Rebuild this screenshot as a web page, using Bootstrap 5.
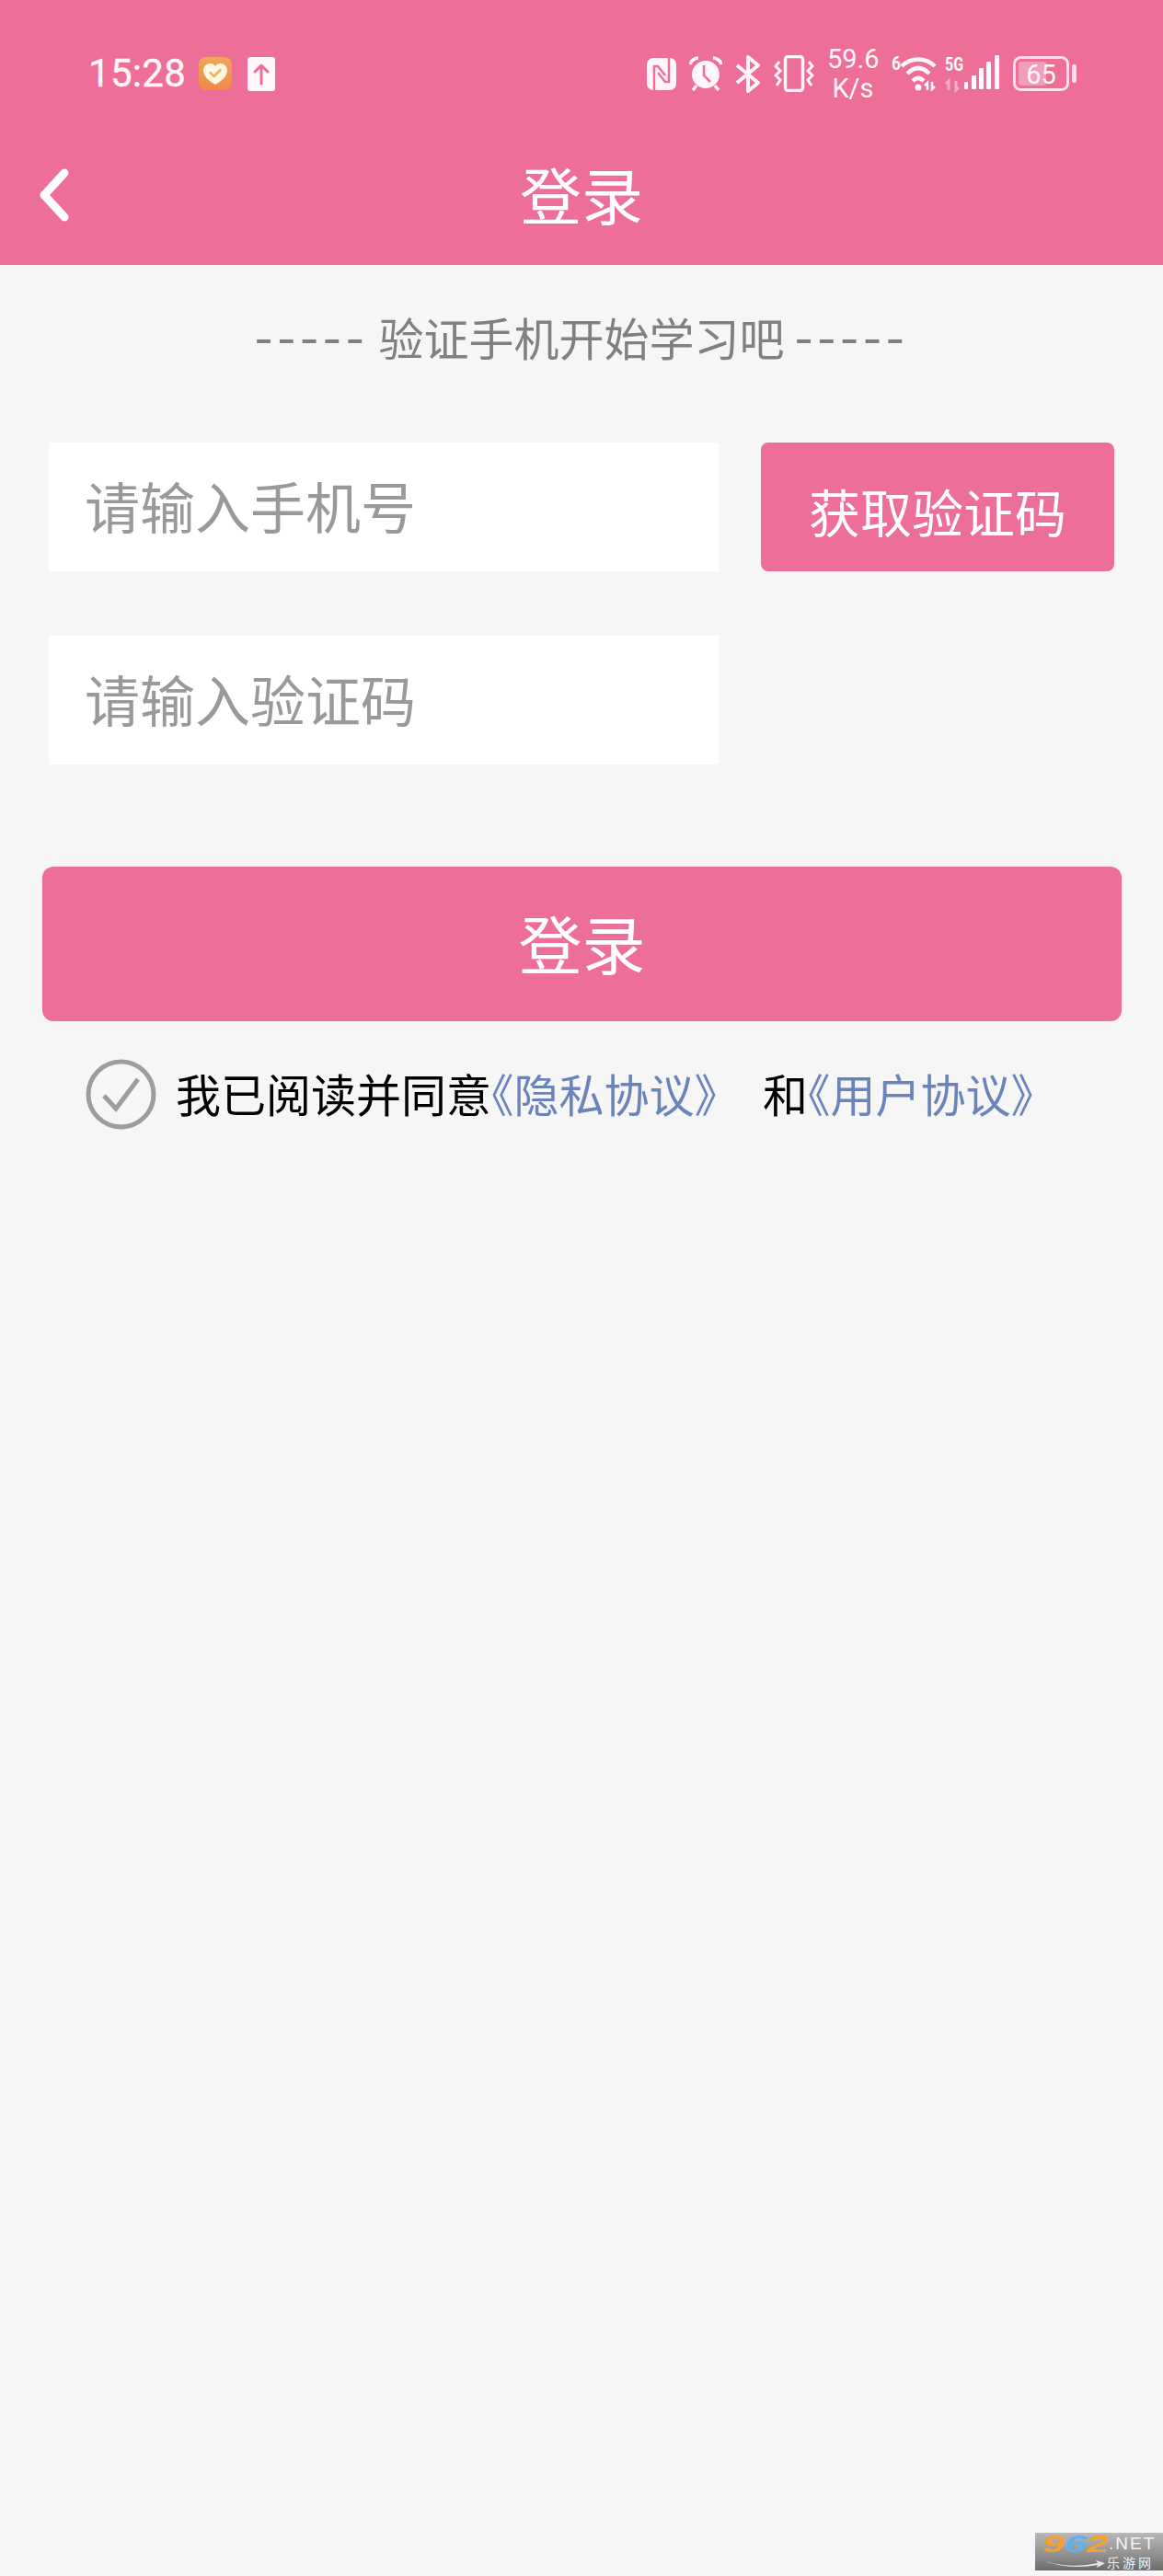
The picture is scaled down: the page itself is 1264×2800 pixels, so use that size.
<!DOCTYPE html>
<html lang="zh-CN">
<head>
  <meta charset="UTF-8">
  <title>登录</title>
  <meta name="viewport" content="width=device-width, initial-scale=1">
  <link href="https://cdn.jsdelivr.net/npm/bootstrap@5.3.0/dist/css/bootstrap.min.css" rel="stylesheet">
  <style>
    :root { --pink: #ed6f97; }
    body {
      background: #f6f6f6;
      font-family: "Noto Sans CJK SC", "Noto Sans", sans-serif;
      min-height: 2800px;
      position: relative;
    }
    .app-head { background: var(--pink); color: #fff; height: 288px; }
    .status-row { height: 160px; padding: 0 93px 0 96px; }
    .clock { font: 400 42px/1 Roboto, sans-serif; letter-spacing: .3px; color: #fff6f9; -webkit-text-stroke: .4px #fff6f9; }
    .left-icons { gap: 17px; margin-left: 14px; }
    .right-icons { gap: 14px; }
    .speed { width: 56px; font: 400 29px/32px Roboto, sans-serif; text-align: center; white-space: nowrap; color: #fff6f9; }
    .title-row { height: 128px; }
    .back-btn { left: 36px; top: 20px; }
    .page-title { font-size: 67px; line-height: 1; font-weight: 400; margin: 0; padding-bottom: 30px; }
    .subtitle { color: #808080; font-size: 49px; line-height: 1; margin: 45px 0 0; font-weight: 400; text-align: center; height: 60px; white-space: nowrap; }
    .dashes { font-size: 58px; letter-spacing: 4.700px; }
    .form-area { margin-top: 88px; padding-left: 53px; }
    .phone-input.form-control {
      width: 728px; height: 140px; border: 0; border-radius: 0; background: #fff;
      font-size: 60px; padding: 0 0 6px 39px; color: #333;
    }
    .phone-input::placeholder { color: #999; opacity: 1; }
    .code-btn.btn {
      width: 384px; height: 140px; margin-left: 46px; padding: 8px 0 0;
      background: var(--pink); border: 0; border-radius: 8px; color: #fff; font-size: 56px; line-height: 1;
    }
    .second-row { margin-top: 70px; }
    .login-btn.btn {
      display: block; width: 1173px; height: 168px; margin: 111px 0 0 46px; padding: 0 0 4px;
      background: var(--pink); border: 0; border-radius: 12px; color: #fff; font-size: 69px; line-height: 1;
    }
    .agree-row { margin-top: 41px; padding-left: 93px; height: 77px; font-size: 49px; color: #000; white-space: nowrap; }
    .agree-row svg { margin-right: 21px; flex: none; }
    .agree-text { line-height: 77px; font-feature-settings: "halt"; padding-bottom: 5px; }
    .agree-link { color: #6a84bb; text-decoration: none; }
    .agree-and { margin-left: 50px; }
    .site-mark {
      position: absolute; right: 0; top: 2753px; width: 139px; height: 41px;
      background: linear-gradient(#b8b8b8, #8f8f8f 60%, #6c6c6c);
    }
    .mark-num { left: 8px; top: -3px; font: italic 700 26px/30px "Liberation Sans", sans-serif; color: #f5a030; transform: scaleX(1.66); transform-origin: left center; }
    .mark-num b { color: #5fb0f0; font-weight: 700; }
    .mark-net { left: 80px; top: 2px; font: 400 19px/20px "Liberation Sans", sans-serif; letter-spacing: 2px; color: #f3f3f3; }
    .mark-cn { left: 78px; top: 22px; font-size: 14px; line-height: 20px; letter-spacing: 3px; color: #f3f3f3; }
    .mark-swoosh { left: 6px; top: 27px; }
  </style>
</head>
<body>

<header class="app-head">
  <div class="status-row d-flex align-items-center justify-content-between">
    <div class="d-flex align-items-center">
      <span class="clock">15:28</span>
      <div class="left-icons d-flex align-items-center">
        <svg width="36" height="36" viewBox="0 0 36 36">
          <defs><linearGradient id="og" x1="0" y1="0" x2="0" y2="1"><stop offset="0" stop-color="#f2a65a"/><stop offset="1" stop-color="#ee8a45"/></linearGradient></defs>
          <rect width="36" height="36" rx="8" fill="url(#og)"/>
          <path d="M18 30C11 26 5 21 5 14.500C5 10 8.500 7 12.500 7C15 7 17 8 18 10C19 8 21 7 23.500 7C27.500 7 31 10 31 14.500C31 21 25 26 18 30Z" fill="#fff7e0"/>
          <path d="M12.500 17l4 4 7-7" fill="none" stroke="#eeb264" stroke-width="2.500" stroke-linecap="round" stroke-linejoin="round"/>
        </svg>
        <svg width="30" height="37" viewBox="0 0 30 37">
          <rect width="30" height="37" rx="3" fill="#fff6f9"/>
          <path d="M15 29V10M8 16l7-7 7 7" fill="none" stroke="#ed6f97" stroke-width="3" stroke-linecap="round" stroke-linejoin="round"/>
        </svg>
      </div>
    </div>
    <div class="right-icons d-flex align-items-center">
      <!-- nfc -->
      <svg width="32" height="35" viewBox="0 0 32 35">
        <rect width="32" height="35" rx="7" fill="#fff6f9"/>
        <path d="M8 35V9h4l8 10M24 0v26h-4l-8-10" fill="none" stroke="#ed6f97" stroke-width="2.500"/>
      </svg>
      <!-- alarm -->
      <svg width="36" height="38" viewBox="0 0 36 38">
        <circle cx="18" cy="20" r="15" fill="#fff6f9"/>
        <path d="M1 9c1-4 5-7 9-7M35 9c-1-4-5-7-9-7M8 32l-4 5M28 32l4 5" fill="none" stroke="#fff6f9" stroke-width="3.500"/>
        <path d="M16 10v11l7 7" fill="none" stroke="#ed6f97" stroke-width="2.500"/>
      </svg>
      <!-- bluetooth -->
      <svg width="28" height="41" viewBox="0 0 28 41">
        <path d="M2 11l23 19-11 9V2l11 9L2 30" fill="none" stroke="#fff6f9" stroke-width="4" stroke-linejoin="round"/>
      </svg>
      <!-- vibrate -->
      <svg width="44" height="40" viewBox="0 0 44 40">
        <rect x="12.500" y="1.500" width="19" height="37" rx="3" fill="none" stroke="#fff6f9" stroke-width="3.500"/>
        <path d="M6 7L2 12l5 5-5 5 5 5-4 6M38 7l4 5-5 5 5 5-5 5 4 6" fill="none" stroke="#fff6f9" stroke-width="3"/>
      </svg>
      <div class="speed">59.6<br>K/s</div>
      <!-- wifi and signal -->
      <svg width="118" height="56" viewBox="0 -8 118 56">
        <text x="0" y="16" font-family="Roboto, sans-serif" font-weight="700" font-size="21" fill="#fff6f9" textLength="10" lengthAdjust="spacingAndGlyphs">6</text>
        <path d="M11 12C21 2 37 2 47 12M17 20C25 12 33 12 41 20M23 28c4-4 8-4 12 0" fill="none" stroke="#fff6f9" stroke-width="4.500"/>
        <circle cx="29" cy="35" r="3.500" fill="#fff6f9"/>
        <path d="M39 38v-8l-3 3M44 29v8l3-3" fill="none" stroke="#fff6f9" stroke-width="2.500"/>
        <text x="58" y="17" font-family="Roboto, sans-serif" font-weight="700" font-size="20" fill="#fff6f9" textLength="20" lengthAdjust="spacingAndGlyphs">5G</text>
        <path d="M62 38v-10l-3 3M70 28v10l3-3" fill="none" stroke="#fff6f9" stroke-opacity=".45" stroke-width="3"/>
        <g fill="#fff6f9">
          <rect x="79" y="29" width="4" height="8" rx="1"/>
          <rect x="87" y="22" width="5" height="15" rx="1"/>
          <rect x="95" y="14" width="5" height="23" rx="1"/>
          <rect x="103" y="7" width="5" height="30" rx="1"/>
          <rect x="112" y="0" width="5" height="37" rx="1"/>
        </g>
      </svg>
      <!-- battery -->
      <svg width="70" height="38" viewBox="0 0 70 38">
        <rect x="1.500" y="1.500" width="58" height="35" rx="7" fill="none" stroke="#fff6f9" stroke-opacity=".85" stroke-width="3"/>
        <rect x="6" y="6" width="30" height="26" rx="3" fill="#fff6f9" fill-opacity=".35"/>
        <rect x="64" y="9" width="5" height="20" rx="2" fill="#fff6f9" fill-opacity=".85"/>
        <text x="30.500" y="30" text-anchor="middle" font-family="Roboto, sans-serif" font-size="29" fill="#fff6f9">65</text>
      </svg>
    </div>
  </div>
  <div class="title-row position-relative d-flex align-items-center justify-content-center">
    <svg class="back-btn position-absolute" width="40" height="64" viewBox="0 0 40 64">
      <path d="M34 8L12 32l22 24" fill="none" stroke="#fff" stroke-width="9" stroke-linecap="round" stroke-linejoin="round"/>
    </svg>
    <h1 class="page-title">登录</h1>
  </div>
</header>

<main>
  <h2 class="subtitle"><span class="dashes">-----</span> 验证手机开始学习吧 <span class="dashes">-----</span></h2>

  <form onsubmit="return false">
    <div class="form-area">
      <div class="d-flex">
        <input type="text" class="phone-input form-control" placeholder="请输入手机号">
        <button type="button" class="code-btn btn">获取验证码</button>
      </div>
      <div class="second-row">
        <input type="text" class="phone-input form-control" placeholder="请输入验证码">
      </div>
    </div>
    <button type="submit" class="login-btn btn">登录</button>
  </form>

  <div class="agree-row d-flex align-items-center">
    <svg width="77" height="77" viewBox="0 0 77 77">
      <circle cx="38.500" cy="38.500" r="35.500" fill="none" stroke="#9d9d9d" stroke-width="5"/>
      <path d="M20 40l13 14 24-32" fill="none" stroke="#9d9d9d" stroke-width="5"/>
    </svg>
    <div class="agree-text">我已阅读并同意<a class="agree-link" href="#">《隐私协议》</a><span class="agree-and">和</span><a class="agree-link" href="#">《用户协议》</a></div>
  </div>
</main>

<div class="site-mark">
  <svg class="mark-swoosh position-absolute" width="70" height="12" viewBox="0 0 70 12">
    <path d="M0 2C20 10 42 10 62 6l-2-3 10 3-9 5 1-3C40 12 18 10 0 2Z" fill="#e8e8e8"/>
  </svg>
  <span class="mark-num position-absolute">9<b>6</b>2</span>
  <span class="mark-net position-absolute">.NET</span>
  <span class="mark-cn position-absolute">乐游网</span>
</div>

<script src="https://cdn.jsdelivr.net/npm/bootstrap@5.3.0/dist/js/bootstrap.bundle.min.js"></script>
</body>
</html>
